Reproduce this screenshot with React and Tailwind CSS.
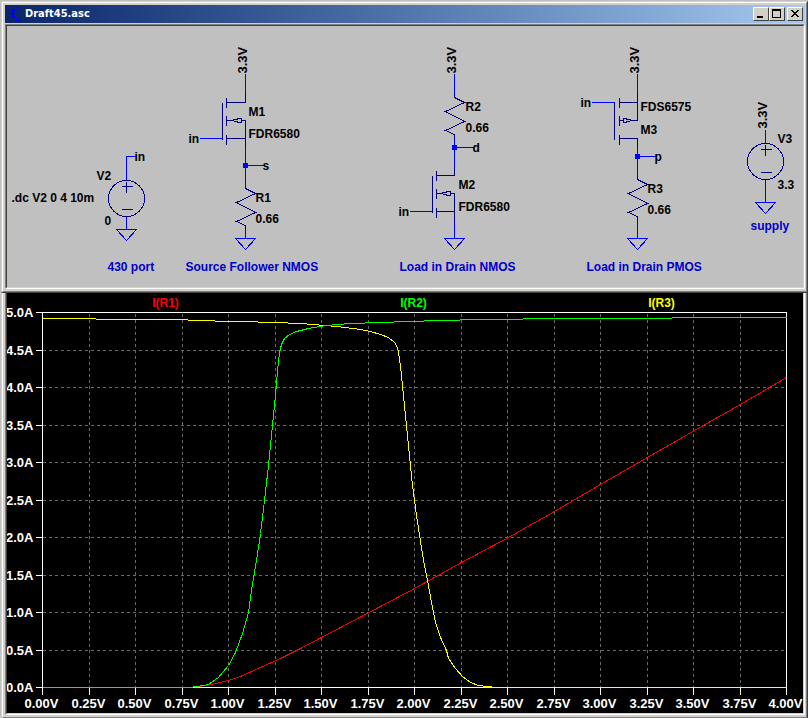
import React from "react";

const traces = [
    {
        name: "I(R1)",
        color: "#ff0000",
        x: 165,
        points: "188,687 198,686 205,685 215,683 228,680 240,676 260,667 280,658 300,648 321,637 380,606 414,588 461,562 508,537 554,511 600,484 647,457 694,430 740,404 786,377",
    },
    {
        name: "I(R3)",
        color: "#ffff00",
        x: 661,
        points: "42,318 95,318 96,319 187,319 188,320 240,321 275,322 300,323 325,325 345,327 360,329 370,331 380,334 388,337 394,342 397,347 399,358 401,375 404,405 408,445 412,485 416,515 420,541 423,560 427,580 431,602 435,622 440,637 446,650 448,658 455,668 462,676 470,682 478,685 487,686 496,687 786,687",
    },
    {
        name: "I(R2)",
        color: "#00ff00",
        x: 413,
        points: "42,687 188,687 197,686 208,684 218,677 228,665 235,652 242,633 248,612 251,590 256,560 260,533 264,500 268,465 272,425 275,395 277,370 279,352 281,344 284,338 289,334 296,331 308,328 325,325 350,323 380,322 408,321 440,320 480,319 522,319 523,318 671,318 672,317 786,317",
    },
];

function WindowButton({ label, children }) {
    return (
        <button
            aria-label={label}
            className="w-4 h-3.5 bg-[#d4d0c8] border border-t-white border-l-white border-r-[#404040] border-b-[#404040]"
        >
            <svg
                viewBox="0 0 14 12"
                className="w-full h-full block"
                shapeRendering="crispEdges"
            >
                {children}
            </svg>
        </button>
    );
}

function Frame({ children, top }) {
    return (
        <div
            className={
                top
                    ? "bg-[#d4d0c8] border border-t-[#d4d0c8] border-l-[#d4d0c8] border-r-[#404040] border-b-[#404040]"
                    : "bg-[#d4d0c8] border-x border-l-[#d4d0c8] border-r-[#404040]"
            }
        >
            <div
                className={
                    top
                        ? "border border-t-white border-l-white border-r-[#808080] border-b-[#808080] pt-0.5 pl-0.5 pr-px pb-0.5"
                        : "border-x border-b border-l-white border-r-[#808080] border-b-[#808080] pl-0.5 pr-px pb-0.5"
                }
            >
                {children}
            </div>
        </div>
    );
}

function Ground({ x, y }) {
    return (
        <path
            d={`M${x - 10} ${y}H${x + 10}L${x} ${y + 11}Z`}
            stroke="#0000ff"
        />
    );
}

function Resistor({ x, y }) {
    return (
        <path
            d={`M${x} ${y - 4}v4l10 5l-19 9l19 10l-19 9l9 4v4`}
            stroke="#000080"
        />
    );
}

function Source({ x, y }) {
    return (
        <g stroke="#000080">
            <circle cx={x} cy={y} r="18" />
            <path
                d={`M${x - 5} ${y - 12}h11M${x} ${y - 17}v11M${x - 5} ${y + 11}h11`}
            />
        </g>
    );
}

function Node({ x, y }) {
    return (
        <g stroke="#0000ff">
            <rect x={x - 2} y={y - 2} width="4" height="4" fill="#0000ff" />
            <path d={`M${x} ${y}h19`} />
        </g>
    );
}

// bars and gate of a mosfet, (x, y) is the top of the gate line
function Mosfet({ x, y, right, pmos }) {
    const bar = pmos ? x + 5 : x + 4;
    return (
        <g stroke="#000080">
            <path
                d={`M${x} ${y}v37M${bar} ${y - 5}v10M${bar} ${y + 13}v10M${bar} ${y + 32}v10`}
            />
            <path d={`M${bar} ${y}H${right}V${y - 9}M${bar} ${y + 36}H${right}v9`} />
            {pmos ? (
                <path
                    d={`M${right} ${y}v18h-3l-8 -1v-1h-3v4h3v-1l8 -1M${right - 14} ${y + 18}h-4`}
                />
            ) : (
                <path
                    d={`M${right} ${y + 36}v-18h-4v-2h-4v1l-8 1l8 1v1h4v-2M${bar} ${y + 18}h4`}
                />
            )}
        </g>
    );
}

function Supply({ x, y }) {
    return (
        <text transform={`translate(${x} ${y}) rotate(-90)`} fontSize="13">
            3.3V
        </text>
    );
}

function Schematic() {
    return (
        <svg
            viewBox="6.5 25.5 796 261"
            className="block w-full h-auto bg-[#c0c0c0] font-['Liberation_Sans',Arial,sans-serif] text-[12px] font-bold"
            fill="none"
        >
            <g shapeRendering="crispEdges">
                <path
                    stroke="#0000ff"
                    d="M136 156H126V180M126 216V229
                       M245 73V94M199 138H222M245 147V185M245 229V238
                       M454 73V94M454 138V167M409 211H432M454 220V238
                       M637 73V94M591 102H614M637 147V177M637 220V238
                       M765 129V143M765 179V202"
                />
                <Source x={126} y={198} />
                <Ground x={126} y={229} />

                <Mosfet x={222} y={102} right={245} />
                <Node x={245} y={165} />
                <Resistor x={245} y={188} />
                <Ground x={245} y={238} />

                <Resistor x={454} y={97} />
                <Node x={454} y={147} />
                <Mosfet x={432} y={175} right={454} />
                <Ground x={454} y={238} />

                <Mosfet x={614} y={102} right={637} pmos />
                <Node x={637} y={156} />
                <Resistor x={637} y={179} />
                <Ground x={637} y={238} />

                <Source x={765} y={161} />
                <Ground x={765} y={202} />
            </g>
            <g fill="#000000">
                <text x="134" y="160">in</text>
                <text x="96" y="179">V2</text>
                <text x="11" y="201">.dc V2 0 4 10m</text>
                <text x="104" y="224">0</text>

                <Supply x={246} y={73} />
                <text x="248" y="115">M1</text>
                <text x="248" y="137">FDR6580</text>
                <text x="188" y="142">in</text>
                <text x="262" y="169">s</text>
                <text x="255" y="201">R1</text>
                <text x="255" y="222">0.66</text>

                <Supply x={455} y={73} />
                <text x="465" y="110">R2</text>
                <text x="465" y="131">0.66</text>
                <text x="472" y="151">d</text>
                <text x="458" y="188">M2</text>
                <text x="458" y="210">FDR6580</text>
                <text x="398" y="215">in</text>

                <Supply x={638} y={73} />
                <text x="580" y="106">in</text>
                <text x="640" y="110">FDS6575</text>
                <text x="640" y="133">M3</text>
                <text x="654" y="160">p</text>
                <text x="647" y="192">R3</text>
                <text x="647" y="213">0.66</text>

                <Supply x={766} y={128} />
                <text x="777" y="142">V3</text>
                <text x="777" y="188">3.3</text>
            </g>
            <g fill="#0000c8">
                <text x="107" y="270">430 port</text>
                <text x="185" y="270">Source Follower NMOS</text>
                <text x="399" y="270">Load in Drain NMOS</text>
                <text x="586" y="270">Load in Drain PMOS</text>
                <text x="750" y="229">supply</text>
            </g>
        </svg>
    );
}

function Plot() {
    const cols = Array.from({ length: 17 }, (_, i) => ({
        x: Math.ceil(42 + i * 46.5),
        label: (i * 0.25).toFixed(2) + "V",
    }));
    const rows = Array.from({ length: 11 }, (_, i) => ({
        y: Math.ceil(312 + i * 37.5),
        label: (5 - i * 0.5).toFixed(1) + "A",
    }));

    return (
        <svg
            viewBox="6.5 292.5 796 420"
            className="block w-full h-auto bg-black font-['Liberation_Sans',Arial,sans-serif] text-[13px] font-bold"
            fill="none"
        >
            <g shapeRendering="crispEdges">
                <g stroke="#696969" strokeDasharray="3 3">
                    {cols.slice(1, -1).map((c) => (
                        <path key={c.x} d={`M${c.x} 313V687`} />
                    ))}
                    {rows.slice(1, -1).map((r) => (
                        <path key={r.y} d={`M42 ${r.y}H786`} />
                    ))}
                </g>
                <g stroke="#ffffff">
                    <rect x="42" y="312" width="744" height="375" />
                    {cols.map((c) => (
                        <path key={c.x} d={`M${c.x} 687v7`} />
                    ))}
                    {rows.map((r) => (
                        <path key={r.y} d={`M35 ${r.y}h7`} />
                    ))}
                </g>
                {traces.map((t) => (
                    <polyline key={t.name} points={t.points} stroke={t.color} />
                ))}
            </g>
            {traces.map((t) => (
                <text
                    key={t.name}
                    x={t.x}
                    y="306"
                    textAnchor="middle"
                    fill={t.color}
                    fontSize="12"
                >
                    {t.name}
                </text>
            ))}
            <g fill="#ffffff">
                {rows.map((r) => (
                    <text key={r.y} x="33" y={r.y + 4} textAnchor="end">
                        {r.label}
                    </text>
                ))}
                {cols.map((c) => (
                    <text key={c.x} x={c.x - 1} y="707" textAnchor="middle">
                        {c.label}
                    </text>
                ))}
            </g>
        </svg>
    );
}

export default function App() {
    return (
        <div className="bg-[#c0c0c0] pl-px pt-px">
            <Frame top>
                <div className="flex items-center h-4.5 mb-px pl-1 pr-0.5 bg-linear-to-r from-[#0a246a] to-[#a6caf0]">
                    <svg
                        viewBox="0 0 16 16"
                        className="w-4 h-4"
                        shapeRendering="crispEdges"
                        stroke="#0000ff"
                        fill="none"
                    >
                        <path d="M0 7.5h3M9 1L4 6M4 9l6 6M6 14h4v-3" />
                        <path d="M3.5 3v9" strokeWidth="2" />
                    </svg>
                    <div className="flex-1 text-white text-[11px] leading-4 font-bold font-['DejaVu_Sans_Condensed','DejaVu_Sans',sans-serif]">
                        Draft45.asc
                    </div>
                    <div className="flex">
                        <WindowButton label="Minimize">
                            <path d="M3 9h6" stroke="#000" strokeWidth="2" />
                        </WindowButton>
                        <WindowButton label="Maximize">
                            <path d="M2 1h9v9H2zM3 3v6h7V3z" fill="#000" fillRule="evenodd" />
                        </WindowButton>
                    </div>
                    <div className="flex ml-0.5">
                        <WindowButton label="Close">
                            <path
                                d="M3 2h2v1h1v1h2V3h1V2h2v1h-1v1H9v1H8v1h1v1h1v1h1v1H9V8H8V7H6v1H5v1H3V8h1V7h1V6h1V5H5V4H4V3H3z"
                                fill="#000"
                            />
                        </WindowButton>
                    </div>
                </div>
                <div className="border border-t-[#808080] border-l-[#808080] border-r-white border-b-white">
                    <div className="border border-t-[#404040] border-l-[#404040] border-r-[#d4d0c8] border-b-[#d4d0c8]">
                        <Schematic />
                    </div>
                </div>
            </Frame>
            <Frame>
                <div className="border-x border-b border-l-[#808080] border-r-white border-b-white">
                    <div className="border-x border-b border-l-[#404040] border-r-[#d4d0c8] border-b-[#d4d0c8]">
                        <Plot />
                    </div>
                </div>
            </Frame>
        </div>
    );
}
